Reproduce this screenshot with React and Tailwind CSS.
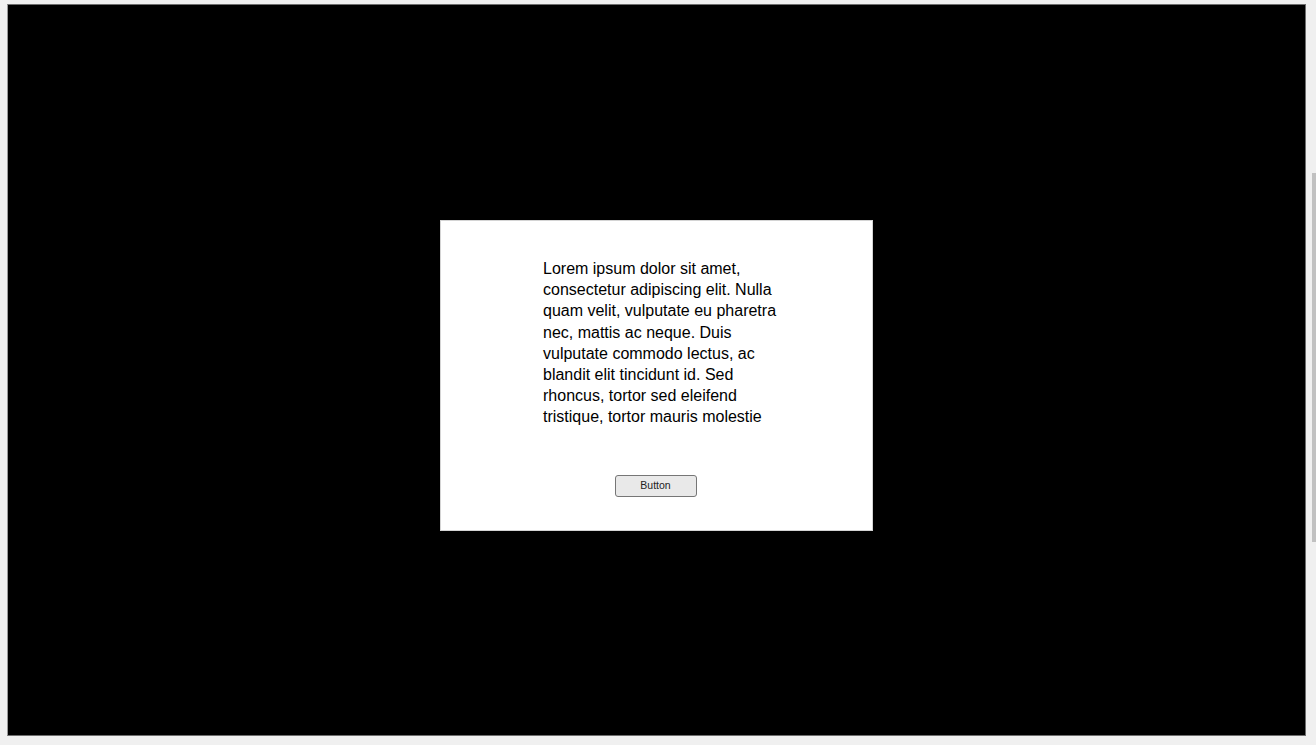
import React from "react";

function App() {
  return (
    <div className="flex h-[745px] w-full overflow-hidden bg-[#f0f0f0] font-['Liberation_Sans',Arial,sans-serif]">
      <div className="flex-1 pl-[7px] pt-[4px] pb-[9px]">
        <div className="flex h-full justify-center border border-t-[#6e6e6e] border-l-[#9a9a9a] border-r-[#6e6e6e] border-b-[#6e6e6e] bg-black pt-[215px]">
          <div className="flex h-[311px] w-[433px] flex-col border border-[#d4d4d4] bg-white">
            <p className="ml-[102px] mt-[37px] w-[244px] text-[16px] leading-[21.2px] text-black">
              Lorem ipsum dolor sit amet, consectetur adipiscing elit. Nulla
              quam velit, vulputate eu pharetra nec, mattis ac neque. Duis
              vulputate commodo lectus, ac blandit elit tincidunt id. Sed
              rhoncus, tortor sed eleifend tristique, tortor mauris molestie
            </p>
            <div className="mt-[47px] flex justify-center pr-[2px]">
              <button className="h-[22px] w-[82px] rounded-[3px] border border-[#767676] bg-[#e9e9e9] text-[10.5px] text-[#222]">
                Button
              </button>
            </div>
          </div>
        </div>
      </div>
      <div className="flex w-[10px] justify-end">
        <div className="mt-[173px] h-[369px] w-[4px] bg-[#c1c1c1]" />
      </div>
    </div>
  );
}

export default App;
